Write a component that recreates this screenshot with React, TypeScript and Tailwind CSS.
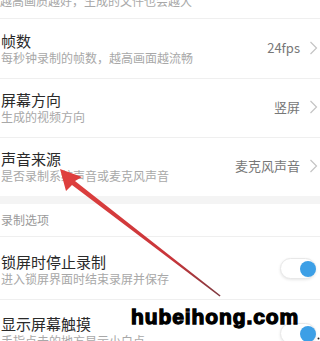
import React from "react";

const font = { fontFamily: '"Noto Sans CJK SC", "Noto Sans", sans-serif' };

function Chevron() {
  return (
    <svg width="9" height="14" viewBox="0 0 9 14" className="ml-[9px] mr-[2px] shrink-0">
      <path d="M1.5 1 L7.5 7 L1.5 13" fill="none" stroke="#c4c4c4" strokeWidth="1.2" />
    </svg>
  );
}

function Toggle() {
  return (
    <div className="relative w-[36px] h-[21px] mr-[4px] shrink-0 rounded-full border border-[#e8e8e8] bg-white shadow-[0_1px_3px_rgba(0,0,0,0.1)]">
      <div className="absolute right-[-1px] top-[2px] w-[16px] h-[16px] rounded-full bg-[#3c9fe6]" />
    </div>
  );
}

function Row({
  title,
  sub,
  value,
  toggle,
  h,
  border = true,
  pt = "",
}: {
  title: string;
  sub: string;
  value?: string;
  toggle?: boolean;
  h: string;
  border?: boolean;
  pt?: string;
}) {
  return (
    <div className={`flex items-center ${h} ${border ? "border-b border-[#efefef]" : ""}`}>
      <div className={`flex-1 flex flex-col pl-[1px] ${pt}`}>
        <div className="text-[15px] leading-[20px] text-[#2a2a2a]">{title}</div>
        <div className="mt-[-1px] text-[12px] leading-[16px] text-[#a8a8a8] whitespace-nowrap">{sub}</div>
      </div>
      {value && (
        <div className="flex items-center mt-[-2px]">
          <span className="text-[13px] leading-[16px] text-[#777]">{value}</span>
          <Chevron />
        </div>
      )}
      {toggle && <Toggle />}
    </div>
  );
}

export default function App() {
  return (
    <div className="relative w-[320px] h-[341px] overflow-hidden bg-white" style={font}>
      <div className="h-[19px] overflow-hidden border-b border-[#efefef]">
        <div className="mt-[-7px] text-[12px] leading-[16px] text-[#a8a8a8] whitespace-nowrap">
          越高画质越好，生成的文件也会越大
        </div>
      </div>
      <Row h="h-[60px]" title="帧数" sub="每秒钟录制的帧数，越高画面越流畅" value="24fps" />
      <Row h="h-[59px]" title="屏幕方向" sub="生成的视频方向" value="竖屏" pt="mt-[-2px]" />
      <Row h="h-[58px]" title="声音来源" sub="是否录制系统声音或麦克风声音" value="麦克风声音" border={false} pt="mt-[-2px]" />
      <div className="h-[8px] bg-[#f4f4f4]" />
      <div className="h-[33px] flex items-center border-b border-[#efefef]">
        <span className="text-[12px] leading-[16px] text-[#999] pl-[1px] mt-[-1px]">录制选项</span>
      </div>
      <Row h="h-[63px]" title="锁屏时停止录制" sub="进入锁屏界面时结束录屏并保存" toggle pt="pt-[3px]" />
      <div className="flex items-start h-[60px]">
        <div className="flex-1 flex flex-col pl-[1px] pt-[14px]">
          <div className="text-[15px] leading-[20px] text-[#2a2a2a]">显示屏幕触摸</div>
          <div className="mt-[-1px] text-[12px] leading-[16px] text-[#a8a8a8] whitespace-nowrap">手指点击的地方显示小白点</div>
        </div>
        <div className="pt-[23px]">
          <Toggle />
        </div>
      </div>

      <svg className="absolute inset-0 pointer-events-none" width="320" height="341" viewBox="0 0 320 341">
        <defs>
          <linearGradient id="ag" x1="60" y1="170" x2="222" y2="297" gradientUnits="userSpaceOnUse">
            <stop offset="0" stopColor="#e0403e" />
            <stop offset="0.7" stopColor="#c8353a" />
            <stop offset="1" stopColor="#7a3a40" />
          </linearGradient>
        </defs>
        <polygon
          points="60,169 66,191 72,185 219.6,296.6 220.6,295.6 75,181 82,177"
          fill="url(#ag)"
        />
        <circle cx="318.5" cy="338.5" r="1" fill="#222" />
      </svg>

      <div
        className="absolute left-[131px] top-[303px] text-[21px] leading-[28px] font-bold text-black tracking-[0.9px] [-webkit-text-stroke:1.3px_black]"
        style={{ fontFamily: '"Liberation Sans", Arial, sans-serif' }}
      >
        hubeihong.com
      </div>
    </div>
  );
}
